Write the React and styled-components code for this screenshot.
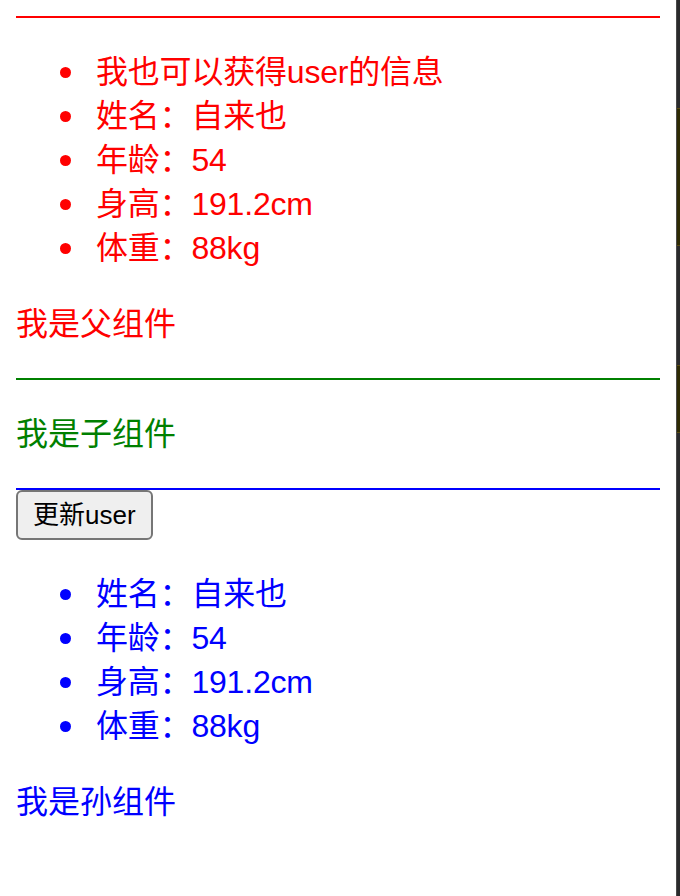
import React, { useState } from "react";
import styled, { createGlobalStyle } from "styled-components";

const GlobalStyle = createGlobalStyle`
  html, body {
    background: #ffffff;
  }
  body {
    margin: 16px 20px 16px 16px;
    font-family: "Liberation Sans", "Noto Sans CJK SC", sans-serif;
    font-size: 32px;
    line-height: 44px;
  }
`;

const Section = styled.div`
  border-top: 2px solid ${({ $color }) => $color};
  color: ${({ $color }) => $color};
`;

const InfoList = styled.ul`
  margin: 32px 0;
  padding-left: 80px;
  list-style: none;
`;

const InfoItem = styled.li`
  position: relative;
  line-height: 44px;
  letter-spacing: -0.2px;

  &::before {
    content: "";
    position: absolute;
    left: -36px;
    top: 17px;
    width: 11px;
    height: 11px;
    border-radius: 50%;
    background: currentColor;
  }
`;

const Caption = styled.p`
  margin: 32px 0;
  line-height: 44px;
`;

const UpdateButton = styled.button`
  display: block;
  height: 50px;
  padding: 0 15px;
  margin: 0;
  background: #efefef;
  border: 2px solid #767676;
  border-radius: 6px;
  color: #000;
  font-family: "Liberation Sans", "Noto Sans CJK SC", sans-serif;
  font-size: 26px;
  line-height: 30px;
  cursor: pointer;
`;

const DevtoolsEdge = styled.div`
  position: fixed;
  top: 0;
  right: 0;
  width: 3px;
  height: 100%;
  background: #2a2a2c;
  border-left: 1px solid #4a4a4a;
`;

const EdgeMark = styled.div`
  position: absolute;
  left: 0;
  right: 0;
  top: ${({ $top }) => $top}px;
  height: ${({ $h }) => $h}px;
  background: #2e2a04;
  border-top: 1px solid #5a4a10;
  border-bottom: 1px solid #5a4a10;
`;

const UserInfo = ({ user }) => (
  <>
    <InfoItem>姓名：{user.name}</InfoItem>
    <InfoItem>年龄：{user.age}</InfoItem>
    <InfoItem>身高：{user.height}cm</InfoItem>
    <InfoItem>体重：{user.weight}kg</InfoItem>
  </>
);

export default function App() {
  const [user, setUser] = useState({
    name: "自来也",
    age: 54,
    height: 191.2,
    weight: 88,
  });

  return (
    <>
      <GlobalStyle />
      <Section $color="red">
        <InfoList>
          <InfoItem>我也可以获得user的信息</InfoItem>
          <UserInfo user={user} />
        </InfoList>
        <Caption>我是父组件</Caption>
        <Section $color="green">
          <Caption>我是子组件</Caption>
          <Section $color="blue">
            <UpdateButton onClick={() => setUser({ ...user })}>更新user</UpdateButton>
            <InfoList>
              <UserInfo user={user} />
            </InfoList>
            <Caption>我是孙组件</Caption>
          </Section>
        </Section>
      </Section>
      <DevtoolsEdge>
        <EdgeMark $top={108} $h={136} />
        <EdgeMark $top={365} $h={66} />
      </DevtoolsEdge>
    </>
  );
}
